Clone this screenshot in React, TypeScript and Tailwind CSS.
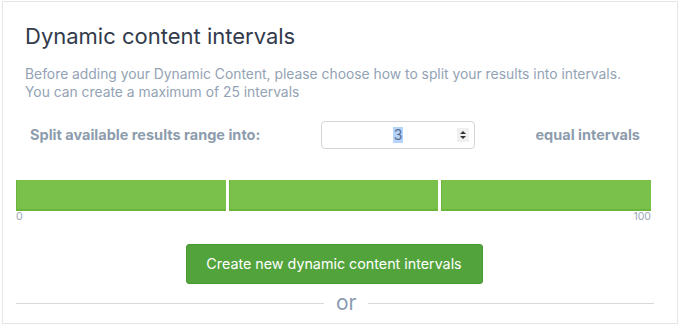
import React from "react";

export default function App() {
  const font = { fontFamily: "Inter, 'Open Sans', sans-serif" };
  return (
    <div className="w-[680px] h-[325px] bg-white" style={font}>
      <div className="ml-[2px] mt-[1px] w-[676px] h-[323px] border border-[#e6e6e6] bg-white pl-[13px] pr-[26px] pt-[20px]">
        <h1 className="pl-[9px] text-[22px] leading-[28px] text-[#323a4b] font-normal">Dynamic content intervals</h1>
        <p className="pl-[9px] mt-[15px] text-[13.85px] leading-[18px] text-[#93a3b5]">
          Before adding your Dynamic Content, please choose how to split your results into intervals.
          <br />
          You can create a maximum of 25 intervals
        </p>
        <div className="mt-[20px] flex items-center h-[28px]">
          <span className="pl-[14px] w-[305px] text-[14.5px] font-bold text-[#8d9cad]">Split available results range into:</span>
          <div className="relative w-[154px] h-[28px] rounded-[4px] border border-[#d4d4d4] flex items-center justify-center">
            <span className="bg-[#b5d4fb] text-[#5b6d8e] text-[14px] leading-[16px] px-[1px]">3</span>
            <div className="absolute right-[5px] top-[6px] w-[12px] h-[14px] bg-[#f0f0f0] flex items-center justify-center">
              <svg width="8" height="10" viewBox="0 0 8 10">
                <path d="M1 4 L4 1 L7 4 Z" fill="#333" />
                <path d="M1 6 L4 9 L7 6 Z" fill="#333" />
              </svg>
            </div>
          </div>
          <span className="ml-auto text-[14.5px] font-bold text-[#8d9cad] mr-[11px]">equal intervals</span>
        </div>
        <div className="mt-[31px] flex gap-[3px] w-[635px]">
          <div className="flex-1 h-[31px] bg-[#79c14b] border-l border-b-2 border-[#6ab53a]" />
          <div className="flex-1 h-[31px] bg-[#79c14b] border-l border-b-2 border-[#6ab53a]" />
          <div className="flex-1 h-[31px] bg-[#79c14b] border-l border-b-2 border-[#6ab53a]" />
        </div>
        <div className="flex justify-between w-[635px] text-[10.5px] leading-[12px] text-[#9aa7b6]">
          <span>0</span>
          <span>100</span>
        </div>
        <div className="mt-[21px] flex justify-center w-[636px]">
          <button className="w-[297px] h-[40px] rounded-[3px] bg-[#53a33d] border border-[#479a30] text-white text-[14.3px]">
            Create new dynamic content intervals
          </button>
        </div>
        <div className="mt-[8px] flex items-center w-[638px]">
          <div className="w-[308px] h-px bg-[#d9d9d9]" />
          <span className="pl-[12px] pr-[11px] text-[21px] leading-[22px] text-[#8c9bb0]">or</span>
          <div className="flex-1 h-px bg-[#d9d9d9]" />
        </div>
      </div>
    </div>
  );
}
